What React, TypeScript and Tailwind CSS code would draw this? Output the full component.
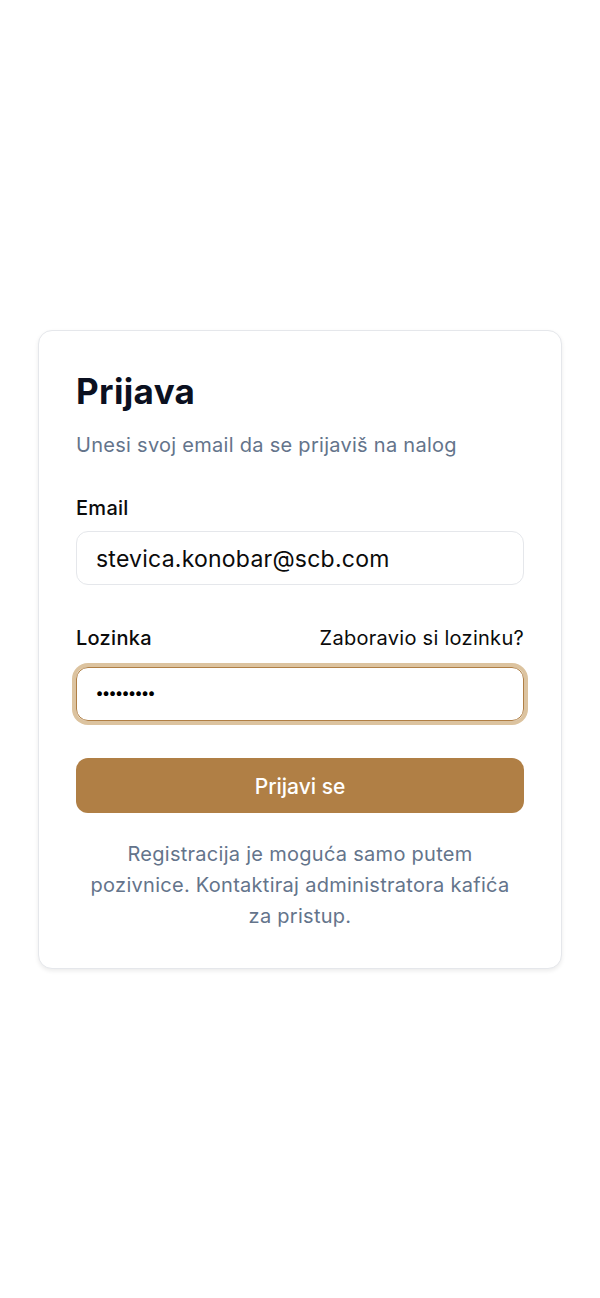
export default function App() {
	return (
		<div className="min-h-[1298px] w-full bg-white flex items-center justify-center px-[38px] font-['Inter',sans-serif]">
			<div className="w-full rounded-[14px] border border-gray-200 bg-white shadow-[0_2px_4px_rgba(0,0,0,0.08)] px-[37px] pt-[40px] pb-[36px]">
				<h1 className="text-[35px] leading-[40px] font-bold text-[#0b1020] tracking-[0.01em]">Prijava</h1>
				<p className="mt-[21px] text-[20px] leading-[26px] text-[#64748b] tracking-[0.014em]">Unesi svoj email da se prijaviš na nalog</p>

				<div className="mt-[37px]">
					<label className="block text-[20px] leading-[26px] font-medium text-[#0b0b0b] tracking-[0.014em]">Email</label>
					<div className="mt-[10px] h-[54px] rounded-[12px] border border-gray-200 flex items-center px-[19px] pt-[3px] text-[23px] text-[#0b0b0b] tracking-[0.01em]">
						stevica.konobar@scb.com
					</div>
				</div>

				<div className="mt-[40px]">
					<div className="flex items-center justify-between text-[20px] leading-[26px] text-[#0b0b0b] tracking-[0.014em]">
						<label className="font-medium">Lozinka</label>
						<span>Zaboravio si lozinku?</span>
					</div>
					<div className="mt-[16px] h-[54px] rounded-[12px] border border-[#b07f45] ring-4 ring-[#dcc39f] flex items-center px-[19px] text-[15px] font-bold text-black tracking-[-0.04em]">
						•••••••••
					</div>
				</div>

				<button className="mt-[37px] w-full h-[55px] rounded-[12px] bg-[#b07f45] text-white text-[21px] font-medium pt-[3px]">
					Prijavi se
				</button>

				<p className="mt-[26px] text-center text-[20px] leading-[31px] text-[#64748b] tracking-[0.014em] px-[6px]">
					Registracija je moguća samo putem pozivnice. Kontaktiraj administratora kafića za pristup.
				</p>
			</div>
		</div>
	);
}
